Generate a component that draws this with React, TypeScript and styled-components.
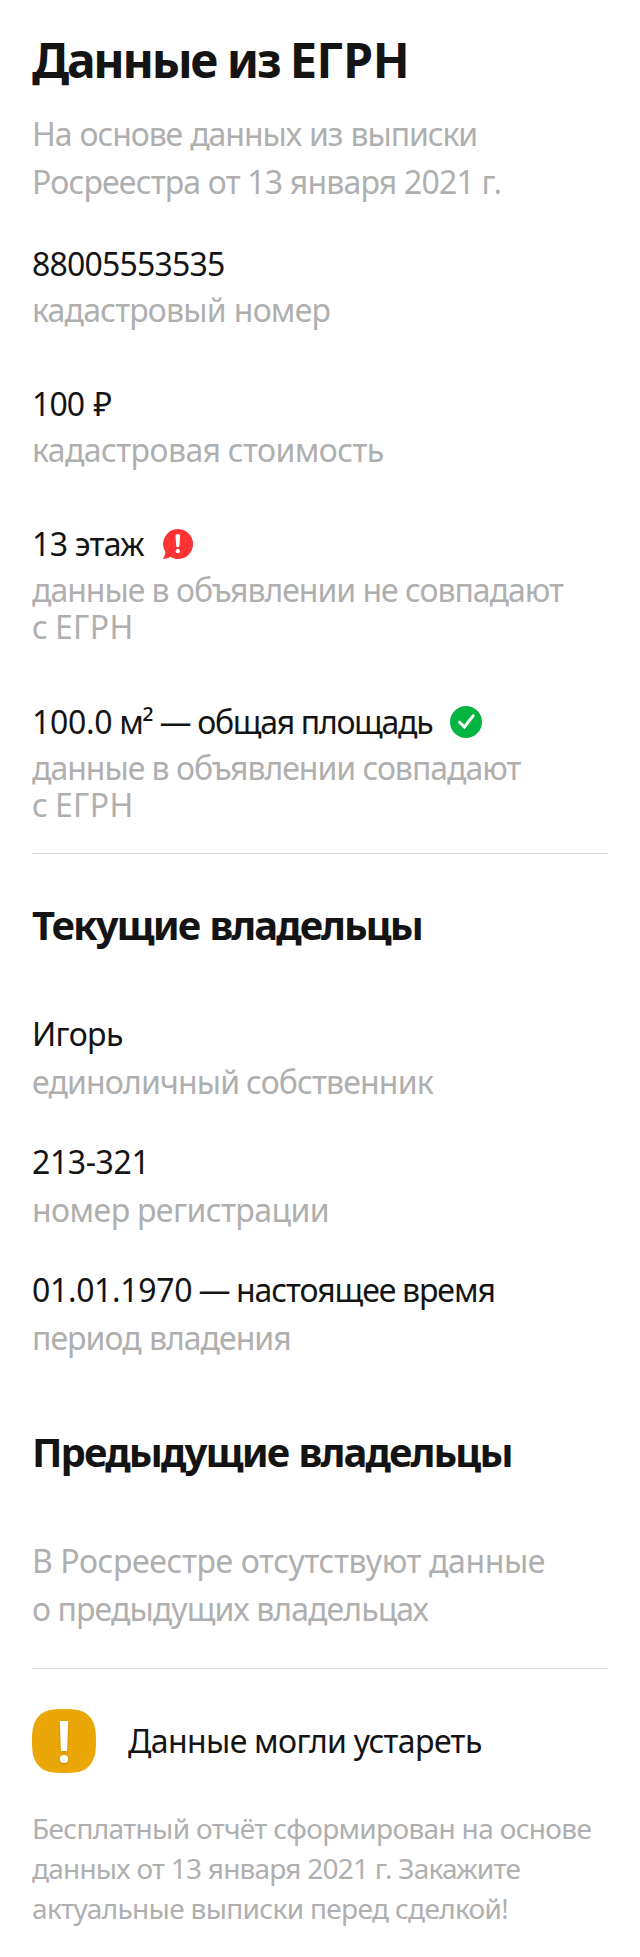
import React from 'react';
import styled, { createGlobalStyle } from 'styled-components';

const GlobalStyle = createGlobalStyle`
  body {
    margin: 0;
    background: #fff;
    color: #141414;
    font-family: 'Noto Sans', sans-serif;
  }
`;

const Page = styled.main`
  box-sizing: border-box;
  width: 640px;
  height: 1957px;
  padding: 34px 32px 0;
`;

const Line = styled.span<{ $ls?: number; $ws?: number }>`
  display: block;
  white-space: nowrap;
  letter-spacing: ${({ $ls = 0 }) => $ls}px;
  word-spacing: ${({ $ws = 0 }) => $ws}px;
`;

const Tracked = styled.span<{ $ls: number }>`
  letter-spacing: ${({ $ls }) => $ls}px;
`;

const Title = styled.h1`
  margin: 0;
  font-size: 48px;
  line-height: 52px;
  font-weight: 700;
`;

const SectionTitle = styled.h2`
  margin: 0;
  font-size: 40px;
  line-height: 48px;
  font-weight: 700;
`;

const Paragraph = styled.p<{ $top: number }>`
  margin: ${({ $top }) => $top}px 0 0;
  font-size: 32px;
  line-height: 48px;
  color: #afafaf;
`;

const Facts = styled.div`
  display: flex;
  flex-direction: column;
  gap: 52px;
  margin-top: 34px;
`;

const Fact = styled.div`
  &:last-child {
    margin-top: 1px;
  }
`;

const Owners = styled.div`
  display: flex;
  flex-direction: column;
  gap: 32px;
  margin-top: 61px;
`;

const Value = styled.div`
  display: flex;
  align-items: center;
  font-size: 32px;
  line-height: 48px;
`;

const Label = styled.div<{ $compact?: boolean }>`
  margin-top: ${({ $compact }) => ($compact ? 3 : 0)}px;
  font-size: 32px;
  line-height: ${({ $compact }) => ($compact ? 37 : 48)}px;
  color: #afafaf;
`;

const Section = styled.section<{ $top: number }>`
  margin-top: ${({ $top }) => $top}px;
`;

const Divider = styled.hr<{ $top: number }>`
  height: 1px;
  margin: ${({ $top }) => $top}px 0 0;
  border: 0;
  background: #d9d9d9;
`;

const Notice = styled.div`
  display: flex;
  align-items: center;
  gap: 32px;
  margin-top: 40px;
`;

const NoticeText = styled.div`
  font-size: 32px;
  line-height: 48px;
`;

const FinePrint = styled.p`
  margin: 35px 0 0;
  font-size: 28px;
  line-height: 40px;
  color: #afafaf;
`;

const StatusIcon = styled.svg`
  flex: none;
  width: 32px;
  height: 32px;
  margin-left: 18px;
`;

const AlertIcon = () => (
  <StatusIcon viewBox="0 0 32 32">
    <path
      d="M16 1A15 15 0 1 1 8.1 28.7C6.1 30.3 3.7 30.9 .7 30.8C2.3 28.7 3.2 26.6 3.4 24A15 15 0 0 1 16 1Z"
      fill="#ff3333"
    />
    <path d="M13.5 7.8Q13.5 6 15.8 6T18.1 7.8L17.4 18Q17.2 19.2 15.8 19.2T14.2 18Z" fill="#fff" />
    <circle cx="15.8" cy="23.2" r="2.1" fill="#fff" />
  </StatusIcon>
);

const CheckIcon = () => (
  <StatusIcon viewBox="0 0 32 32">
    <circle cx="16" cy="16" r="16" fill="#04b440" />
    <path d="M9.6 16.2L14.4 21L23.2 9.8" fill="none" stroke="#fff" strokeWidth="3" strokeLinecap="round" />
  </StatusIcon>
);

const WarningIcon = () => (
  <svg width="64" height="64" viewBox="0 0 64 64">
    <defs>
      <filter id="mark-shadow" x="-50%" y="-20%" width="200%" height="150%">
        <feDropShadow dx="0" dy="1.5" stdDeviation="1.5" floodColor="#8a5a00" floodOpacity="0.35" />
      </filter>
    </defs>
    <path
      d="M32 0C44 0 52 1 57 7C63 13 64 21 64 32C64 43 63 51 57 57C52 63 44 64 32 64C20 64 12 63 7 57C1 51 0 43 0 32C0 21 1 13 7 7C12 1 20 0 32 0Z"
      fill="#eba607"
    />
    <g fill="#fff" filter="url(#mark-shadow)">
      <path d="M27.8 12H36.2L35 42H29Z" />
      <circle cx="32" cy="50" r="4.1" />
    </g>
  </svg>
);

export default function App() {
  return (
    <>
      <GlobalStyle />
      <Page>
        <Title>
          <Line $ls={-2.3} $ws={0.6}>
            Данные из <Tracked $ls={-0.4}>ЕГРН</Tracked>
          </Line>
        </Title>
        <Paragraph $top={24}>
          <Line $ls={-1.09} $ws={0.93}>На основе данных из выписки</Line>
          <Line $ls={-0.81}>Росреестра от 13 января 2021 г.</Line>
        </Paragraph>

        <Facts>
          <Fact>
            <Value><Line $ls={-0.8}>88005553535</Line></Value>
            <Label $compact><Line $ls={-0.8} $ws={0.4}>кадастровый номер</Line></Label>
          </Fact>
          <Fact>
            <Value><Line $ls={-0.9} $ws={1.8}>100 ₽</Line></Value>
            <Label $compact><Line $ls={-0.57} $ws={-0.4}>кадастровая стоимость</Line></Label>
          </Fact>
          <Fact>
            <Value><Line $ls={-0.6} $ws={-0.5}>13 этаж</Line><AlertIcon /></Value>
            <Label $compact>
              <Line $ls={-1.02}>данные в объявлении не совпадают</Line>
              <Line $ls={0.4} $ws={-2}>с ЕГРН</Line>
            </Label>
          </Fact>
          <Fact>
            <Value>
              <Line $ls={-1.3}>
                <Tracked $ls={-0.3}>100.0</Tracked> м² — общая площадь
              </Line>
              <CheckIcon />
            </Value>
            <Label $compact>
              <Line $ls={-1.02}>данные в объявлении совпадают</Line>
              <Line $ls={0.4} $ws={-2}>с ЕГРН</Line>
            </Label>
          </Fact>
        </Facts>
        <Divider $top={30} />

        <Section $top={47}>
          <SectionTitle><Line $ls={-1.95} $ws={1.8}>Текущие владельцы</Line></SectionTitle>
          <Owners>
            <div>
              <Value><Line $ls={-0.6}>Игорь</Line></Value>
              <Label><Line $ls={-0.85} $ws={-0.6}>единоличный собственник</Line></Label>
            </div>
            <div>
              <Value><Line $ls={-0.4}>213-321</Line></Value>
              <Label><Line $ls={-0.55} $ws={-0.4}>номер регистрации</Line></Label>
            </div>
            <div>
              <Value>
                <Line $ls={-1.05} $ws={-0.8}>
                  <Tracked $ls={-0.35}>01.01.1970</Tracked> — настоящее время
                </Line>
              </Value>
              <Label><Line $ls={-0.98} $ws={1}>период владения</Line></Label>
            </div>
          </Owners>
        </Section>

        <Section $top={66}>
          <SectionTitle><Line $ls={-1.9} $ws={1.8}>Предыдущие владельцы</Line></SectionTitle>
          <Paragraph $top={61}>
            <Line $ls={-0.39}>В Росреестре отсутствуют данные</Line>
            <Line $ls={-0.92}>о предыдущих владельцах</Line>
          </Paragraph>
        </Section>
        <Divider $top={35} />

        <Notice>
          <WarningIcon />
          <NoticeText><Line $ls={-0.6} $ws={-0.4}>Данные могли устареть</Line></NoticeText>
        </Notice>
        <FinePrint>
          <Line $ls={-0.66}>Бесплатный отчёт сформирован на основе</Line>
          <Line $ls={-0.77}>данных от 13 января 2021 г. Закажите</Line>
          <Line $ls={-0.66}>актуальные выписки перед сделкой!</Line>
        </FinePrint>
      </Page>
    </>
  );
}
